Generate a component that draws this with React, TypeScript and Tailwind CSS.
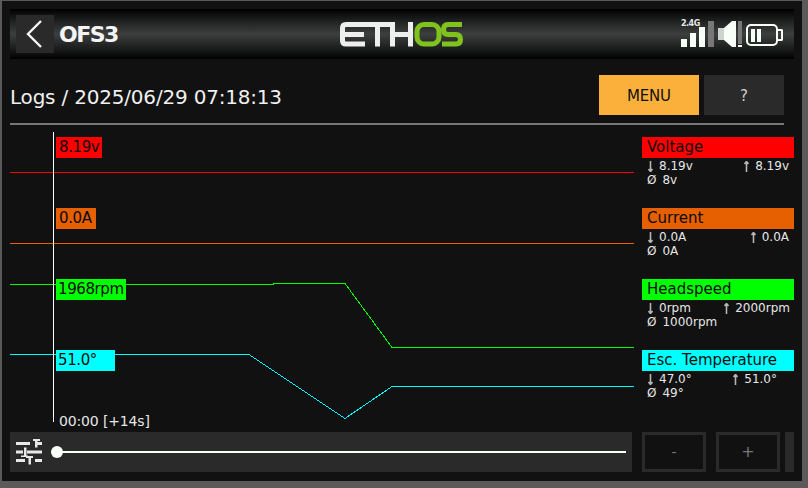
const font = { fontFamily: '"DejaVu Sans", sans-serif' }

const sensors = [
  { name: 'Voltage', head: 'bg-[#ff0000]', min: '8.19v', max: '8.19v', avg: '8v', right: 'pr-[5px]', gap: 'mb-[50px]' },
  { name: 'Current', head: 'bg-[#e65f00]', min: '0.0A', max: '0.0A', avg: '0A', right: 'pr-[5px]', gap: 'mb-[50px]' },
  { name: 'Headspeed', head: 'bg-[#00ff00]', min: '0rpm', max: '2000rpm', avg: '1000rpm', right: 'pr-[4px]', gap: 'mb-[50px]' },
  { name: 'Esc. Temperature', head: 'bg-[#00ffff]', min: '47.0°', max: '51.0°', avg: '49°', right: 'pr-[17px]', gap: 'mb-0' },
]

const flags = [
  { text: '8.19v', cls: 'top-[12px] w-[46px] bg-[#ff0000] pl-[3px]' },
  { text: '0.0A', cls: 'top-[83px] w-[40px] bg-[#e65f00] pl-[3px]' },
  { text: '1968rpm', cls: 'top-[154px] w-[70px] bg-[#00ff00] pl-[2px]' },
  { text: '51.0°', cls: 'top-[225px] w-[59px] bg-[#00ffff] pl-[2px]' },
]

function Arrow({ up }: { up?: boolean }) {
  return (
    <svg width="5" height="11" viewBox="0 0 5 11" className="shrink-0">
      <path d={up ? 'M2.5 0.5 L2.5 11 M0.5 3 L2.5 0.5 L4.5 3' : 'M2.5 0 L2.5 10.5 M0.5 8 L2.5 10.5 L4.5 8'} stroke="#b5b5b5" strokeWidth="1.6" fill="none" />
    </svg>
  )
}

function EthosLogo() {
  return (
    <svg width="124" height="26" viewBox="340 21 124 26" fill="none" strokeWidth="5">
      <g stroke="#eeeeee">
        <path d="M365 24.5 H346 Q342.5 24.5 342.5 28 V40.5 Q342.5 44 346 44 H365" />
        <path d="M343 34.5 H364" />
        <path d="M364 24.5 H390 M377.5 24.5 V46.5" />
        <path d="M392.5 22 V46.5 M410.5 22 V46.5 M393 34.5 H410" />
      </g>
      <g stroke="#7fc31c">
        <rect x="417" y="24.5" width="22" height="19.5" rx="7" />
        <path d="M462 24.5 H448 Q443.5 24.5 443.5 29.5 Q443.5 34.5 448 34.5 H456 Q460.5 34.5 460.5 39.5 Q460.5 44 456 44 H442" />
      </g>
    </svg>
  )
}

function StatusIcons() {
  return (
    <div className="relative flex h-[26px] w-[102px] items-end">
      <span className="absolute left-0 top-[-2px] text-[8px] leading-[10px] font-bold tracking-[-0.5px] text-[#e8e8e8]">2.4G</span>
      <div className="flex items-end gap-[3px]">
        <div className="h-[8px] w-[6px] bg-[#f8fff8]" />
        <div className="h-[14px] w-[6px] bg-[#f8fff8]" />
        <div className="h-[20px] w-[6px] bg-[#f8fff8]" />
        <div className="h-[26px] w-[6px] bg-[#777777]" />
      </div>
      <svg width="20" height="26" viewBox="0 0 20 26" className="ml-[4px]">
        <path d="M6 7 L14 0 H18 V26 H14 L6 19 Z" fill="#f8fff8" />
        <path d="M0 7 H6 V19 H0 Z" fill="#cdd3cd" />
      </svg>
      <div className="flex h-[26px] w-[4px] flex-col justify-between">
        <div className="h-[23px] bg-[#777777]" />
        <div className="h-[2px] bg-[#f8fff8]" />
      </div>
      <div className="mb-[1px] ml-[4px] flex h-[22px] w-[32px] items-center gap-[2px] rounded-[5px] border-2 border-[#f8fff8] pl-[3px]">
        <div className="h-[13px] w-[4px] bg-[#f8fff8]" />
        <div className="h-[13px] w-[4px] bg-[#f8fff8]" />
      </div>
      <div className="mb-[6px] h-[12px] w-[5px] rounded-r-[2px] border-2 border-l-0 border-[#f8fff8]" />
    </div>
  )
}

function SlidersIcon() {
  return (
    <svg width="26" height="26" viewBox="0 0 26 26" fill="#e8e8e8" className="shrink-0">
      <path d="M0 3 H14 V6 H0 Z M21 3 H26 V6 H21 Z M17 0 H24 V2 H21.5 V8.5 H19 V2 H17 Z" />
      <path d="M0 11.5 H7 V14.5 H0 Z M11 11.5 H26 V14.5 H11 Z M8 8.5 H10.5 V16.5 H12 V18 H5 V16.5 H8 Z" />
      <path d="M0 20 H9 V23 H0 Z M19 20 H26 V23 H19 Z M10 17 H17 V19 H15 V25.5 H12.5 V19 H10 Z" />
    </svg>
  )
}

function Chart() {
  return (
    <div className="relative h-[303px] w-[624px]">
      <svg width="624" height="303" viewBox="10 125 624 303" className="absolute inset-0" fill="none" strokeWidth="1" shapeRendering="crispEdges">
        <path d="M10 172.5 H634" stroke="#ff0000" />
        <path d="M10 243.5 H634" stroke="#e65f00" />
        <path d="M10 284.5 H273 V283.5 H345 L392 347.5 H634" stroke="#00ff00" />
        <path d="M10 354.5 H249 L345 418.5 L392 386.5 H634" stroke="#00ffff" />
        <path d="M53.5 132 V422" stroke="#ffffff" />
      </svg>
      {flags.map((f) => (
        <div key={f.text} className={`absolute left-[46px] h-[21px] text-[15px] leading-[21px] tracking-[-0.4px] text-[#0c0c0c] ${f.cls}`}>
          {f.text}
        </div>
      ))}
      <div className="absolute left-[49px] top-[288px] text-[14px] leading-[16px] tracking-[-0.15px] text-[#e6e6e6]">00:00 [+14s]</div>
    </div>
  )
}

export default function App() {
  return (
    <div className="h-[488px] w-[808px] bg-[#5a5a5a] pb-[7px] pl-[2px] pr-[6px] pt-[1px]" style={font}>
      <div className="flex h-[480px] w-[800px] flex-col bg-[#111111] pl-[8px] pt-[8px]">
        <header className="relative flex h-[50px] w-[784px] items-center bg-[linear-gradient(to_bottom,#000000_0%,#1a1c1b_20%,#3d3f3e_50%,#1a1c1b_80%,#000000_100%)] pl-[6px] pr-[11px]">
          <div className="flex h-[38px] w-[38px] items-center justify-center bg-[#2a2a2a]">
            <svg width="20" height="30" viewBox="0 0 20 30" fill="none">
              <path d="M16 2 L3 15 L16 28" stroke="#f5f5f5" strokeWidth="2.4" />
            </svg>
          </div>
          <h1 className="ml-[5px] pt-[1px] text-[22px] font-bold leading-[26px] tracking-[-1.5px] text-[#f5f5f5]">OFS3</h1>
          <div className="absolute left-[330px] top-[12px]">
            <EthosLogo />
          </div>
          <div className="ml-auto">
            <StatusIcons />
          </div>
        </header>

        <div className="mt-[16px] flex h-[40px] w-[774px] items-center">
          <span className="pt-[3px] text-[20px] tracking-[-0.2px] text-[#f0f0f0]">Logs / 2025/06/29 07:18:13</span>
          <button className="ml-auto h-[40px] w-[100px] bg-[#fbb03b] pt-[2px] text-[15px] tracking-[-0.2px] text-[#111111]">MENU</button>
          <button className="ml-[5px] h-[40px] w-[80px] bg-[#2a2a2a] pt-[2px] text-[15px] text-[#d0d0d0]">?</button>
        </div>
        <div className="mt-[8px] h-[2px] w-[774px] bg-[#777777]" />

        <div className="flex h-[303px]">
          <Chart />
          <div className="ml-[8px] w-[152px] pt-[12px]">
            {sensors.map((s) => (
              <div key={s.name} className={`h-[21px] ${s.gap}`}>
                <div className={`h-[21px] pl-[5px] text-[15px] leading-[21px] text-[#0c0c0c] ${s.head}`}>{s.name}</div>
                <div className={`mt-[1px] flex h-[14px] items-center justify-between pl-[6px] text-[12px] leading-[14px] text-[#e6e6e6] ${s.right}`}>
                  <span className="flex items-center gap-[6px]"><Arrow />{s.min}</span>
                  <span className="flex items-center gap-[6px]"><Arrow up />{s.max}</span>
                </div>
                <div className="flex h-[14px] gap-[6px] pl-[5px] text-[12px] leading-[14px] text-[#e6e6e6]">
                  <span>Ø</span>
                  <span>{s.avg}</span>
                </div>
              </div>
            ))}
          </div>
        </div>

        <div className="mt-[4px] flex h-[40px] w-[784px]">
          <div className="flex w-[622px] items-center bg-[#2a2a2a] pl-[6px] pr-[6px]">
            <SlidersIcon />
            <div className="relative ml-[9px] h-[2px] flex-1 bg-[#f8fff8]">
              <div className="absolute left-0 top-[-5px] h-[12px] w-[12px] rounded-full bg-[#f8fff8]" />
            </div>
          </div>
          <button className="ml-[10px] h-[40px] w-[64px] border-[3px] border-[#2a2a2a] text-[14px] text-[#777777]">-</button>
          <button className="ml-[10px] h-[40px] w-[64px] border-[3px] border-[#2a2a2a] text-[16px] text-[#777777]">+</button>
          <div className="ml-[5px] h-[40px] w-[9px] bg-[#2a2a2a]" />
        </div>
      </div>
    </div>
  )
}
